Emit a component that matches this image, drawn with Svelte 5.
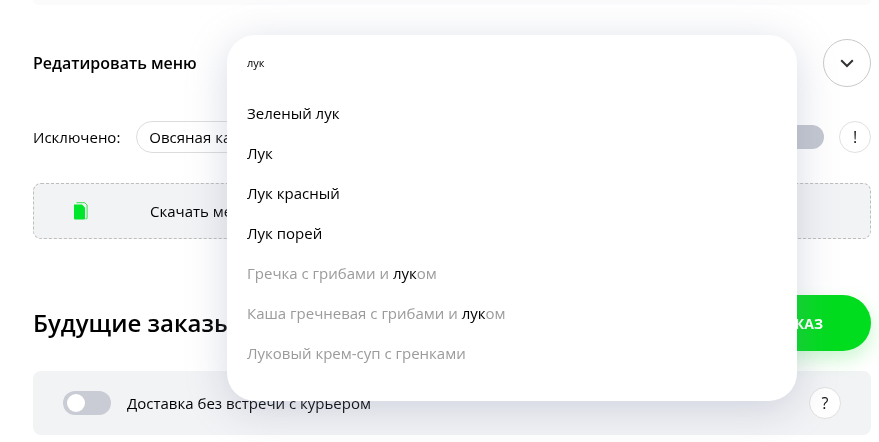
<script>
  const items = ['Зеленый лук', 'Лук', 'Лук красный', 'Лук порей'];
  const partial = [
    ['Гречка с грибами и ', 'лук', 'ом'],
    ['Каша гречневая с грибами и ', 'лук', 'ом']
  ];
</script>

<div class="page">
  <div class="sliver"></div>

  <section class="edit">
    <h3>Редатировать меню</h3>
    <button class="circle big" aria-label="Развернуть">
      <svg width="14" height="9" viewBox="0 0 14 9"><path d="M1.2 1.2 7 7l5.8-5.8" fill="none" stroke="#333" stroke-width="2"/></svg>
    </button>
  </section>

  <section class="excluded">
    <span class="label">Исключено:</span>
    <span class="chip">Овсяная каша</span>
    <span class="grow"></span>
    <span class="switch-end"></span>
    <button class="circle">!</button>
  </section>

  <section class="download">
    <svg class="doc" width="15" height="18" viewBox="0 0 15 18">
      <path d="M3.5.7h8.2l2.4 2.4v13q0 .7-.7.7h-1" fill="none" stroke="#00dc1e" stroke-width=".8"/>
      <path d="M1 2.5h8l3 3v11q0 1-1 1H2q-1 0-1-1z" fill="#00e62a"/>
    </svg>
    <span>Скачать меню</span>
  </section>

  <section class="future">
    <h2>Будущие заказы</h2>
    <button class="cta">СОЗДАТЬ ЗАКАЗ</button>
  </section>

  <section class="delivery">
    <span class="toggle"><i></i></span>
    <span class="del-text">Доставка без встречи с курьером</span>
    <button class="circle">?</button>
  </section>

  <div class="popup">
    <div class="query">лук</div>
    <ul>
      {#each items as item}
        <li>{item}</li>
      {/each}
      {#each partial as p}
        <li class="dim">{p[0]}<b>{p[1]}</b>{p[2]}</li>
      {/each}
      <li class="dim">Луковый крем-суп с гренками</li>
    </ul>
  </div>
</div>

<style>
  :global(body) { margin: 0; background: #fff; }
  .page {
    position: relative;
    width: 879px;
    height: 442px;
    overflow: hidden;
    box-sizing: border-box;
    padding: 0 8px 0 33px;
    font-family: "Open Sans", "Noto Sans", sans-serif;
    font-size: 15px;
    color: #000;
    will-change: transform;
  }
  .sliver {
    height: 5px;
    background: #fbfbfc;
    border-radius: 0 0 6px 6px;
  }
  .edit {
    display: flex;
    align-items: center;
    justify-content: space-between;
    margin-top: 34px;
  }
  h3 { margin: 0; font-size: 16px; font-weight: 600; line-height: 24px; }
  .circle {
    flex: none;
    width: 32px;
    height: 32px;
    padding: 0;
    box-sizing: border-box;
    border: 1px solid #e0e0e0;
    border-radius: 50%;
    background: #fff;
    display: flex;
    align-items: center;
    justify-content: center;
    font: 400 16px "Open Sans", sans-serif;
    color: #111;
  }
  .circle.big { width: 48px; height: 48px; border-color: #c9c9c9; }
  .excluded {
    display: flex;
    align-items: center;
    margin-top: 34px;
    height: 32px;
  }
  .label { margin-right: 16px; }
  .chip {
    height: 32px;
    box-sizing: border-box;
    border: 1px solid #dcdcdc;
    border-radius: 16px;
    padding: 0 12px;
    line-height: 30px;
  }
  .grow { flex: 1; }
  .switch-end {
    width: 48px;
    height: 24px;
    border-radius: 12px;
    background: #c3c7d0;
    margin-right: 15px;
  }
  .download {
    display: flex;
    align-items: center;
    height: 56px;
    box-sizing: border-box;
    margin-top: 30px;
    padding-left: 39px;
    background: #f2f3f5;
    border: 1px dashed #bdbdbd;
    border-radius: 8px;
  }
  .doc { margin-right: 62px; }
  .future {
    display: flex;
    align-items: center;
    justify-content: space-between;
    margin-top: 56px;
    height: 56px;
  }
  h2 { margin: 0; font-size: 24px; font-weight: 600; line-height: 32px; }
  .cta {
    height: 56px;
    padding: 0 48px;
    border: 0;
    border-radius: 28px;
    background: #00dc1e;
    color: #fff;
    font: 700 14px "Open Sans", sans-serif;
    box-shadow: 0 8px 20px rgba(0, 220, 30, 0.22);
  }
  .delivery {
    display: flex;
    align-items: center;
    height: 64px;
    margin-top: 20px;
    padding: 0 30px;
    background: #f2f3f5;
    border-radius: 8px;
  }
  .toggle {
    width: 48px;
    height: 24px;
    box-sizing: border-box;
    padding: 3px 4px;
    border-radius: 12px;
    background: #c9ccd4;
    margin-right: 16px;
  }
  .toggle i {
    display: block;
    width: 18px;
    height: 18px;
    border-radius: 50%;
    background: #fff;
  }
  .del-text { flex: 1; }
  .popup {
    position: absolute;
    left: 227px;
    top: 35px;
    width: 570px;
    height: 366px;
    box-sizing: border-box;
    background: #fff;
    border-radius: 28px;
    padding: 0 20px;
    box-shadow: 0 8px 40px rgba(130, 140, 170, 0.32);
  }
  .query {
    font-size: 11px;
    line-height: 16px;
    margin-top: 20px;
  }
  ul { list-style: none; margin: 22px 0 0; padding: 0; }
  li { height: 40px; line-height: 40px; white-space: nowrap; }
  .dim { color: #9b9b9b; }
  .dim b { color: #000; font-weight: 400; }
</style>
